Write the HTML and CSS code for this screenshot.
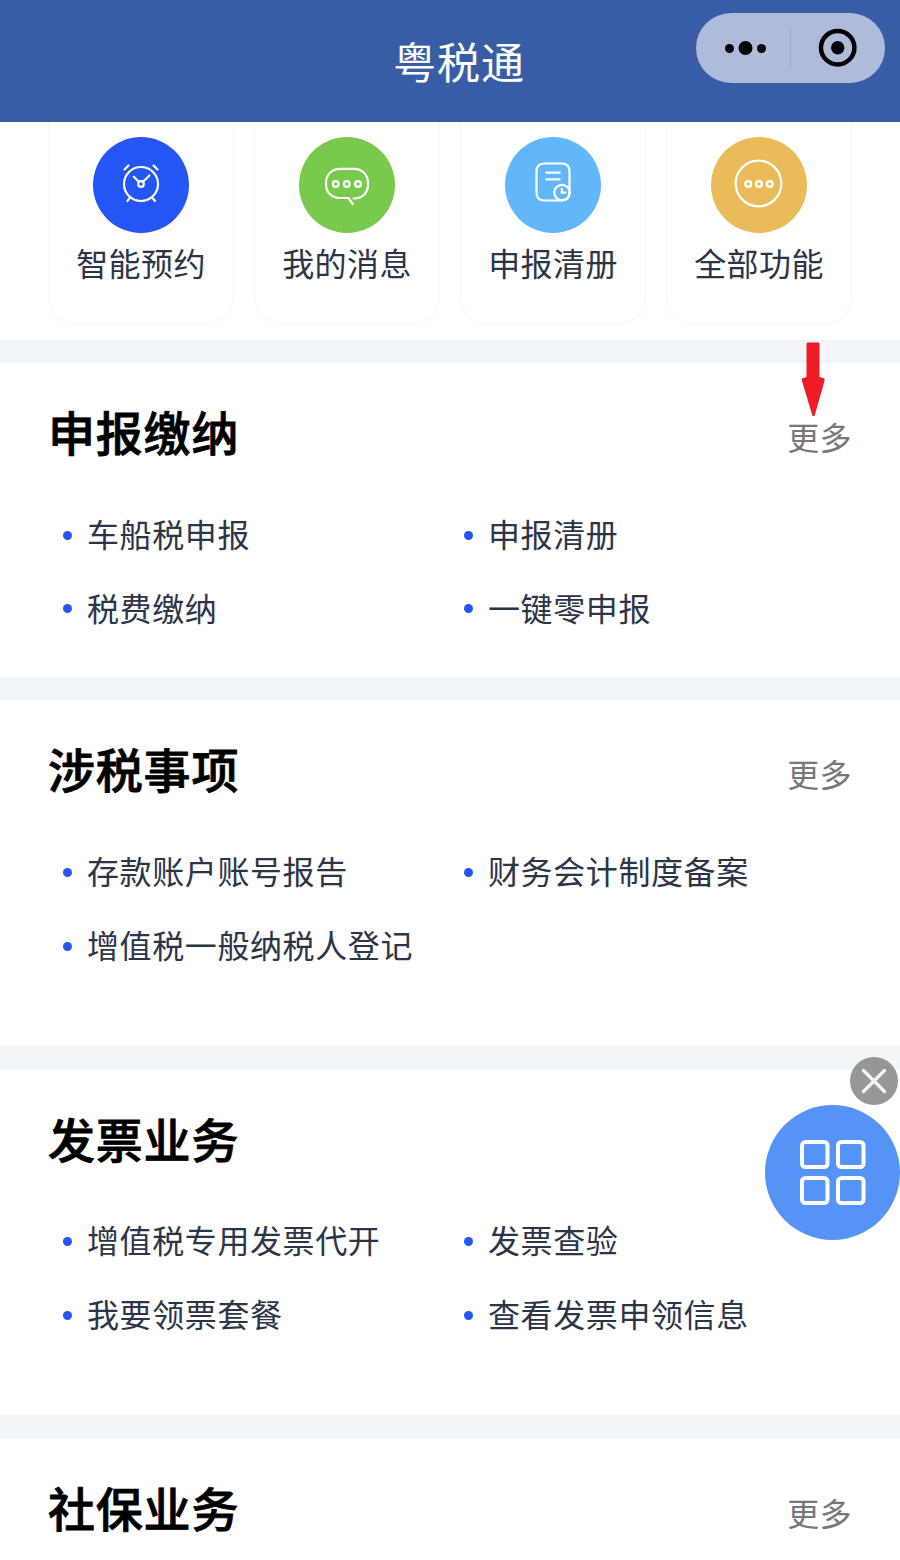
FILE: index.html
```
<!DOCTYPE html>
<html lang="zh-CN">
<head>
    <meta charset="UTF-8">
    <meta name="viewport" content="width=device-width, initial-scale=1.0">
    <title>粤税通</title>
    <link rel="stylesheet" href="styles.css">
</head>
<body>
    <header class="header">
        <h1>粤税通</h1>
        <div class="capsule">
            <svg width="189" height="70" viewBox="0 0 189 70">
                <circle cx="33.5" cy="35.5" r="4.5"/>
                <circle cx="49.5" cy="35" r="7"/>
                <circle cx="65.5" cy="35.5" r="4.5"/>
                <path d="M94.5 14.500v41" stroke="#98a9cb" stroke-width="1"/>
                <circle cx="141.7" cy="34.700" r="16.700" fill="none" stroke="#000" stroke-width="4.500"/>
                <circle cx="141.7" cy="34.700" r="6.700"/>
            </svg>
        </div>
    </header>

    <!-- 快捷入口 -->
    <nav class="shortcuts">
        <a class="card">
            <span class="icon blue">
                <svg width="96" height="96" viewBox="0 0 96 96">
                    <circle cx="48" cy="47" r="17"/>
                    <circle cx="48" cy="47" r="2.800"/>
                    <path d="M45.700 44.800L40.800 39.800M50 44.800L56.500 38.500M31.500 32.500L35.500 28.500M60.500 28.500L64.500 32.500M36.500 61L34.500 64M59.500 61L62 64"/>
                </svg>
            </span>
            <span>智能预约</span>
        </a>
        <a class="card">
            <span class="icon green">
                <svg width="96" height="96" viewBox="0 0 96 96">
                    <path d="M54.500 61.500H56C64 61 69 55.500 69 47.500V46C69 37.500 63 31.800 55 31.800H41C33 31.800 27 37.500 27 46V47.500C27 55.500 33 61 41 61H49.500L53.800 67"/>
                    <circle cx="36.700" cy="47" r="2.900"/>
                    <circle cx="47.800" cy="47" r="2.900"/>
                    <circle cx="59" cy="47" r="2.900"/>
                </svg>
            </span>
            <span>我的消息</span>
        </a>
        <a class="card">
            <span class="icon sky">
                <svg width="96" height="96" viewBox="0 0 96 96">
                    <path d="M56.500 63.500H39.500Q31.500 63.500 31.500 55.500V34.500Q31.500 26.500 39.500 26.500H56.500Q64.500 26.500 64.500 34.500V55.500Q64.500 63.500 56.500 63.500M41.500 35.700H54.700M41.500 42.300H54.700"/>
                    <circle cx="57" cy="55.500" r="7.700"/>
                    <path d="M56.800 51.800V55.600H60.500"/>
                </svg>
            </span>
            <span>申报清册</span>
        </a>
        <a class="card">
            <span class="icon gold">
                <svg width="96" height="96" viewBox="0 0 96 96">
                    <circle cx="47.500" cy="46.500" r="22.800"/>
                    <circle cx="37.200" cy="47" r="2.900"/>
                    <circle cx="48" cy="47" r="2.900"/>
                    <circle cx="58.800" cy="47" r="2.900"/>
                </svg>
            </span>
            <span>全部功能</span>
        </a>
    </nav>

    <section class="section short">
        <div class="section-head">
            <h2>申报缴纳</h2>
            <a class="more">更多
                <svg class="arrow" width="24" height="75" viewBox="0 0 24 75">
                    <path d="M5.500 1.500L6.500 .500H17.500L18.500 1.500V35L23.500 36.500V39L13.500 74H11.500L1 39V36.500L5.500 35Z" fill="#ee1c25"/>
                </svg>
            </a>
        </div>
        <ul>
            <li>车船税申报</li>
            <li>申报清册</li>
            <li>税费缴纳</li>
            <li>一键零申报</li>
        </ul>
    </section>

    <section class="section">
        <div class="section-head">
            <h2>涉税事项</h2>
            <a class="more">更多</a>
        </div>
        <ul>
            <li>存款账户账号报告</li>
            <li>财务会计制度备案</li>
            <li>增值税一般纳税人登记</li>
        </ul>
    </section>

    <section class="section">
        <div class="section-head">
            <h2>发票业务</h2>
        </div>
        <ul>
            <li>增值税专用发票代开</li>
            <li>发票查验</li>
            <li>我要领票套餐</li>
            <li>查看发票申领信息</li>
        </ul>
    </section>

    <section class="section last">
        <div class="section-head">
            <h2>社保业务</h2>
            <a class="more">更多</a>
        </div>
    </section>

    <!-- 悬浮按钮 -->
    <div class="float">
        <svg class="close" width="48" height="48" viewBox="0 0 48 48">
            <circle cx="24" cy="24" r="24" fill="#8c8c8c" fill-opacity=".9"/>
            <path d="M13.500 13.500L34.500 34.500M34.500 13.500L13.500 34.500" stroke="#f4f4f4" stroke-width="3.400" stroke-linecap="round"/>
        </svg>
        <svg class="grid-btn" width="135" height="135" viewBox="0 0 135 135">
            <circle cx="67.500" cy="67.500" r="67.500" fill="#5593f7"/>
            <g fill="none" stroke="#fff" stroke-width="4">
                <rect x="37" y="37" width="25.500" height="25" rx="3.500"/>
                <rect x="73" y="37" width="25.500" height="25" rx="3.500"/>
                <rect x="37" y="73" width="25.500" height="25" rx="3.500"/>
                <rect x="73" y="73" width="25.500" height="25" rx="3.500"/>
            </g>
        </svg>
    </div>
</body>
</html>
```
FILE: styles.css
```
body {
    font-family: "Noto Sans CJK SC", sans-serif;
    background-color: #f2f5fa;
    margin: 0;
    position: relative;
    color: #2c3448;
}

h1, h2, ul {
    margin: 0;
    padding: 0;
    font-weight: normal;
}

svg {
    display: block;
}

.header {
    height: 121.500px;
    box-sizing: border-box;
    padding-top: 30px;
    padding-left: 18px;
    background: #395da5;
    text-align: center;
}

.header h1 {
    font-size: 43px;
    line-height: 60px;
    letter-spacing: 0.8px;
    color: #fff;
}

.capsule {
    position: absolute;
    top: 13px;
    right: 15px;
    border-radius: 35px;
    background: #aebcda;
}

/* 快捷入口 */
.shortcuts {
    display: grid;
    grid-template-columns: repeat(4, 1fr);
    gap: 20px;
    height: 218px;
    box-sizing: border-box;
    padding: 0 48px 15px;
    background: #fff;
}

.card {
    display: flex;
    flex-direction: column;
    align-items: center;
    padding-top: 15px;
    border: 1px solid #f5f5f6;
    border-top: none;
    border-radius: 0 0 28px 28px;
    font-size: 32px;
    line-height: 48px;
    letter-spacing: 0.4px;
}

.icon {
    width: 96px;
    height: 96px;
    margin-right: 1px;
    margin-bottom: 5px;
    border-radius: 50%;
}

.icon svg {
    fill: none;
    stroke: #fff;
    stroke-width: 2.2;
    stroke-linecap: round;
}

.blue { background: #2456f6; }
.green { background: #78ca4c; }
.sky { background: #62b6fa; }
.gold { background: #eabb59; }

/* 业务分区 */
.section {
    height: 345.500px;
    box-sizing: border-box;
    margin-top: 23.700px;
    padding: 33px 48px 0;
    background: #fff;
}

.short {
    height: 313.500px;
}

.last {
    height: 121px;
}

.section-head {
    display: flex;
    justify-content: space-between;
    height: 102px;
}

.last .section-head {
    height: auto;
}

.section h2 {
    font-size: 47px;
    line-height: 70px;
    letter-spacing: 0.8px;
    font-weight: 500;
    -webkit-text-stroke: 0.8px #000;
    color: #000;
}

.more {
    position: relative;
    padding-top: 16px;
    font-size: 32px;
    line-height: 48px;
    letter-spacing: 0.4px;
    color: #777;
}

.arrow {
    position: absolute;
    left: 14px;
    top: -54px;
}

.section ul {
    display: grid;
    grid-template-columns: 401px 1fr;
    list-style: none;
}

.section li {
    display: flex;
    align-items: center;
    height: 73.800px;
    box-sizing: border-box;
    padding-left: 15px;
    padding-bottom: 4px;
    font-size: 32px;
    letter-spacing: 0.600px;
    white-space: nowrap;
}

.section li::before {
    content: "";
    width: 9px;
    height: 9px;
    margin-top: 4px;
    margin-right: 15px;
    border-radius: 50%;
    background: #2456f6;
}

/* 悬浮按钮 */
.float {
    position: absolute;
    top: 1057px;
    right: 0;
}

.close {
    margin-left: 85px;
}
```
